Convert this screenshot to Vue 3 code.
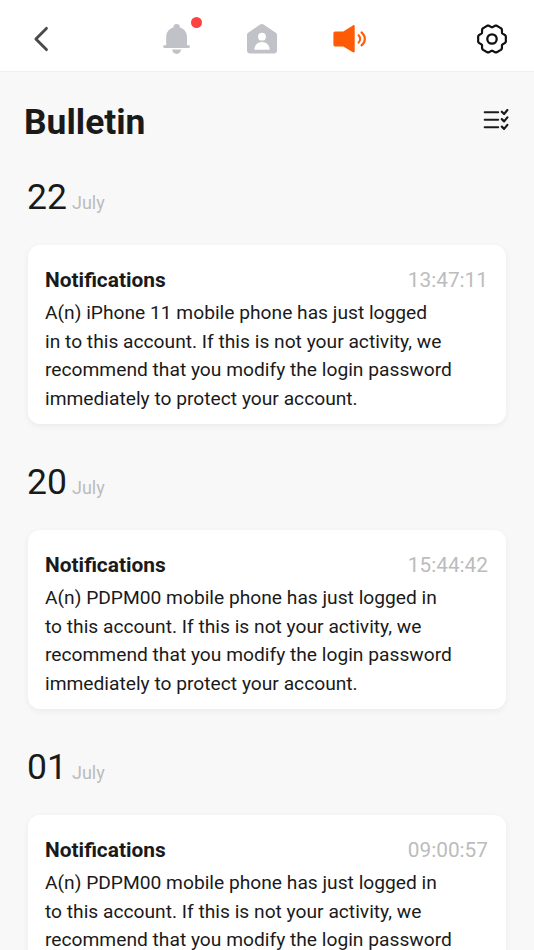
<template>
  <div class="screen">
    <header class="topbar">
      <button class="icon-button" type="button" aria-label="Back">
        <svg width="16" height="28" viewBox="0 0 16 28">
          <path d="M13.4 3.4 2.9 14l10.5 10.6" fill="none" stroke="#4a4a4a" stroke-width="2.9" stroke-linecap="round" stroke-linejoin="round" />
        </svg>
      </button>

      <nav class="tabs">
        <button class="icon-button bell" type="button" aria-label="Alarms">
          <svg width="28" height="32" viewBox="0 0 28 32">
            <path d="M1.5 22.2a1.4 1.4 0 0 0 0 2.8h24.1a1.4 1.4 0 0 0 0-2.8H24v-8.4c0-4.8-3-8.2-7.2-9.4V4.1a3.2 3.2 0 0 0-6.4 0v.3C6.2 5.6 3.2 9 3.2 13.8v8.4z" fill="#c1c1c8" />
            <path d="M9 26.6h9.2c-.5 2.7-2.2 4.3-4.6 4.3S9.5 29.3 9 26.6z" fill="#c1c1c8" />
          </svg>
          <span class="dot"></span>
        </button>
        <button class="icon-button" type="button" aria-label="Home">
          <svg width="32" height="32" viewBox="0 0 32 32">
            <path d="M14.1 1.5 2.2 9.7C1.3 10.3 1 11 1 12v15.6a3 3 0 0 0 3 3h24a3 3 0 0 0 3-3V12c0-1-.3-1.7-1.2-2.3L17.5 1.5a2.9 2.9 0 0 0-3.4 0z" fill="#c1c1c8" />
            <circle cx="16" cy="13.7" r="3.9" fill="#fff" />
            <path d="M8.3 26.7c.2-4.9 3.5-7.8 7.7-7.8s7.5 2.9 7.7 7.8z" fill="#fff" />
          </svg>
        </button>
        <button class="icon-button" type="button" aria-label="Bulletin">
          <svg width="34" height="30" viewBox="0 0 34 30">
            <path d="M2 7.4h8.3L19.9 1.4c.9-.6 1.8-.2 1.8.9v25c0 1.1-.9 1.5-1.8.9l-9.6-5.8H2A1.6 1.6 0 0 1 .4 20.8V9A1.6 1.6 0 0 1 2 7.4z" fill="#ff5a05" />
            <path d="M25.6 11.2c1.9 2.1 1.9 5.3 0 7.4M28.5 8.4c4.5 3.8 4.5 9.2 0 13" fill="none" stroke="#ff5a05" stroke-width="2.1" stroke-linecap="round" />
          </svg>
        </button>
      </nav>

      <button class="icon-button" type="button" aria-label="Settings">
        <svg width="32" height="32" viewBox="-16 -16 32 32" fill="none" stroke="#111">
          <path :d="gearPath" stroke-width="2.2" stroke-linejoin="round" />
          <circle r="4.7" stroke-width="2.3" />
        </svg>
      </button>
    </header>

    <main class="content">
      <div class="heading">
        <h1>Bulletin</h1>
        <button class="icon-button" type="button" aria-label="Select messages">
          <svg width="26" height="22" viewBox="0 0 26 22" fill="none" stroke="#1b1b1b" stroke-width="2" stroke-linecap="round" stroke-linejoin="round">
            <path d="M1.7 3.3h13.5M1.7 10.7h13.5M1.7 18.2h13.5" />
            <path d="m18.8 2.7 2.3 2.3 3.3-4M18.8 10.1l2.3 2.3 3.3-4M18.8 17.6l2.3 2.3 3.3-4" stroke-width="2.2" />
          </svg>
        </button>
      </div>

      <section v-for="item in bulletins" :key="item.day" class="group">
        <div class="date">
          <span class="day">{{ item.day }}</span>
          <span class="month">July</span>
        </div>
        <article class="card">
          <div class="card-header">
            <h2>Notifications</h2>
            <time>{{ item.time }}</time>
          </div>
          <p>{{ item.lead }} this account. If this is not your activity, we
recommend that you modify the login password
immediately to protect your account.</p>
        </article>
      </section>
    </main>
  </div>
</template>

<script setup>
const bulletins = [
  { day: '22', time: '13:47:11', lead: 'A(n) iPhone 11 mobile phone has just logged\nin to' },
  { day: '20', time: '15:44:42', lead: 'A(n) PDPM00 mobile phone has just logged in\nto' },
  { day: '01', time: '09:00:57', lead: 'A(n) PDPM00 mobile phone has just logged in\nto' }
]

// six flat lobes, with a notch at the top and at the bottom
const gearPath =
  Array.from({ length: 120 }, (_, i) => {
    const angle = (i * Math.PI) / 60
    const wave = (1 - Math.cos(6 * angle)) / 2
    const r = 14.3 - 2.6 * Math.pow(wave, 2.5) - 0.5 * Math.pow(1 - wave, 4)
    return `${i ? 'L' : 'M'}${(r * Math.cos(angle)).toFixed(2)} ${(r * Math.sin(angle)).toFixed(2)}`
  }).join('') + 'Z'
</script>

<style>
body {
  margin: 0;
  background: #f8f8f8;
}
</style>

<style scoped>
.screen {
  height: 950px;
  overflow: hidden;
  background: #f8f8f8;
  color: #1a1a1a;
  font-family: Roboto, 'Liberation Sans', sans-serif;
}

.icon-button {
  display: block;
  padding: 0;
  border: none;
  background: transparent;
  cursor: pointer;
}

.icon-button svg {
  display: block;
}

.topbar {
  display: flex;
  align-items: center;
  justify-content: space-between;
  box-sizing: border-box;
  height: 72px;
  padding: 6px 26px 0 33px;
  border-bottom: 1px solid #f0f0f0;
  background: #fff;
}

.tabs {
  display: flex;
  align-items: center;
  gap: 55px;
  margin-left: 5px;
}

.bell {
  position: relative;
}

.dot {
  position: absolute;
  top: -6px;
  right: -11px;
  width: 11px;
  height: 11px;
  border-radius: 50%;
  background: #ff4141;
}

.content {
  padding: 28px 28px 0;
}

.heading {
  display: flex;
  align-items: center;
  justify-content: space-between;
  height: 42px;
  margin: 0 -3px 0 -4px;
}

.heading .icon-button {
  margin-bottom: 2px;
}

.heading h1 {
  margin: 0;
  padding-top: 1px;
  font-size: 35.4px;
  line-height: 42px;
  font-weight: 700;
}

.date {
  display: flex;
  align-items: baseline;
  gap: 7px;
  height: 42px;
  margin-left: -1px;
  line-height: 42px;
}

.day {
  width: 38px;
  font-size: 35.5px;
}

.month {
  color: #bcbcbc;
  font-size: 18px;
}

.group {
  height: 251px;
  padding-top: 34px;
}

.card {
  box-sizing: border-box;
  height: 179px;
  margin-top: 27px;
  padding: 22px 18px 0 17px;
  border-radius: 12px;
  background: #fff;
  box-shadow: 0 2px 6px rgba(0, 0, 0, 0.06);
}

.card-header {
  display: flex;
  align-items: center;
  justify-content: space-between;
  height: 25px;
}

.card-header h2 {
  margin: 0;
  font-size: 20.9px;
  font-weight: 700;
}

.card-header time {
  color: #bcbcbc;
  font-size: 20.8px;
}

.card p {
  margin: 7px 0 0;
  font-size: 19.22px;
  line-height: 28.7px;
  white-space: pre-line;
}
</style>
